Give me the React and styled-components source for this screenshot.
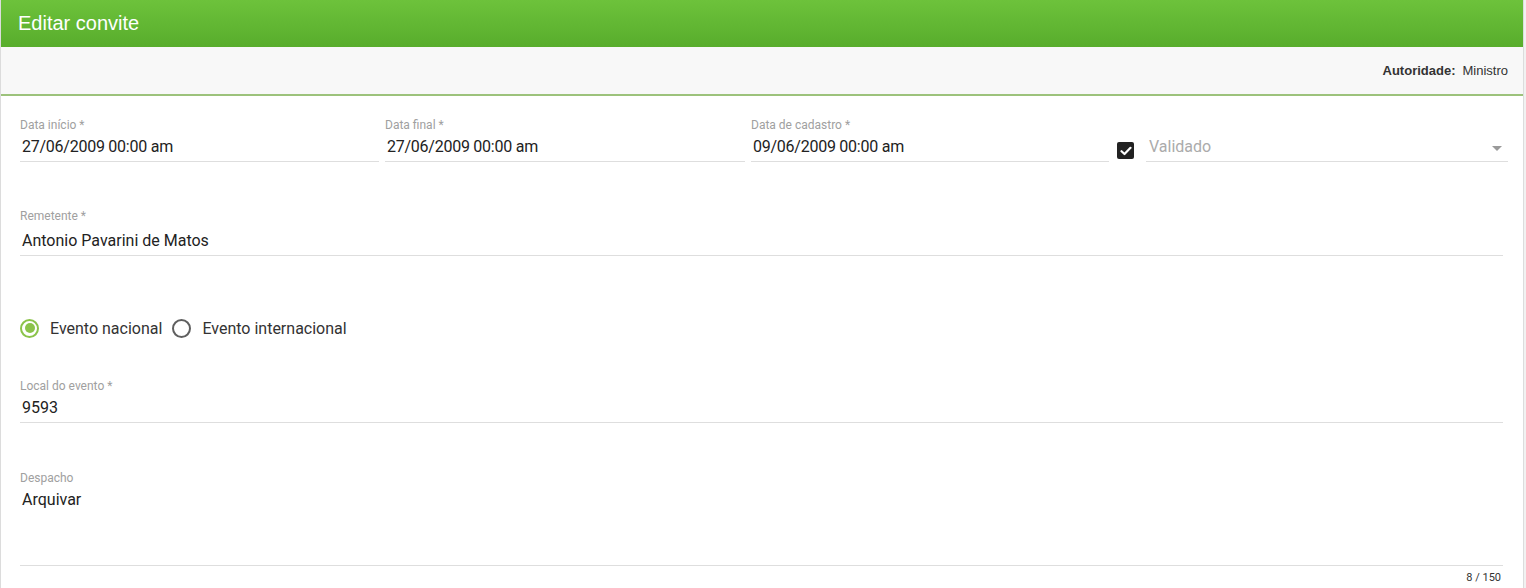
import React from 'react';
import styled, { createGlobalStyle } from 'styled-components';

const GlobalStyle = createGlobalStyle`
    body {
        margin: 0;
        background: #f1f1f1;
        font-family: Roboto, "Liberation Sans", Arial, sans-serif;
    }
`;

const Card = styled.div`
    width: 1522px;
    height: 588px;
    background: #fff;
    border-left: 1px solid #dcdcdc;
    border-right: 1px solid #dcdcdc;
    overflow: hidden;
`;

const Header = styled.div`
    height: 47px;
    display: flex;
    align-items: center;
    padding-left: 17px;
    background: linear-gradient(#6dc23b, #58ad2c);
    color: #fff;
    font-family: "Liberation Sans", Arial, sans-serif;
    font-size: 20px;
`;

const InfoBar = styled.div`
    height: 47px;
    display: flex;
    align-items: center;
    justify-content: flex-end;
    padding-right: 15px;
    background: #f8f8f8;
    border-bottom: 2px solid #9cc27b;
    font-family: "Liberation Sans", Arial, sans-serif;
    font-size: 13px;
    color: #333;
    b {
        margin-right: 7px;
    }
`;

const Form = styled.div`
    padding: 22px 20px 0 19px;
`;

const DateRow = styled.div`
    display: grid;
    grid-template-columns: 359px 360px 358px 25px 362px;
    column-gap: 6px;
`;

const Section = styled.div`
    margin-top: ${(p) => p.top || 0}px;
`;

const Field = styled.div`
    display: flex;
    flex-direction: column;
`;

const Label = styled.label`
    font-size: 12px;
    line-height: 14px;
    color: #a0a0a0;
    margin-bottom: ${(p) => p.gap || 1}px;
`;

const Value = styled.div`
    height: ${(p) => p.h || 28}px;
    line-height: 28px;
    font-size: 16px;
    color: #222;
    padding-left: 2px;
    border-bottom: 1px solid #dedede;
    letter-spacing: ${(p) => (p.date ? '-0.25px' : 'normal')};
`;

const CheckCell = styled.div`
    display: flex;
    justify-content: center;
    padding-top: 24px;
    padding-right: 4px;
`;

const CheckBox = styled.span`
    width: 17px;
    height: 17px;
    border-radius: 2px;
    background: #222;
    display: flex;
    align-items: center;
    justify-content: center;
`;

const Select = styled.div`
    margin-top: 15px;
    height: 28px;
    line-height: 28px;
    border-bottom: 1px solid #dedede;
    display: flex;
    justify-content: space-between;
    align-items: center;
    padding: 0 6px 0 3px;
    font-size: 16px;
    color: #ababab;
`;

const Caret = styled.span`
    width: 0;
    height: 0;
    border-left: 5px solid transparent;
    border-right: 5px solid transparent;
    border-top: 5px solid #9a9a9a;
    margin-top: 2px;
`;

const RadioGroup = styled.div`
    display: flex;
    align-items: center;
    height: 18px;
`;

const RadioOption = styled.label`
    display: flex;
    align-items: center;
    margin-right: 10px;
    font-size: 16px;
    color: #333;
`;

const Ring = styled.span`
    box-sizing: border-box;
    width: 19px;
    height: 19px;
    border-radius: 50%;
    border: 2px solid ${(p) => (p.checked ? '#8bc34a' : '#5f5f5f')};
    display: flex;
    align-items: center;
    justify-content: center;
    margin-right: 11px;
    &::after {
        content: '';
        width: 10px;
        height: 10px;
        border-radius: 50%;
        background: ${(p) => (p.checked ? '#8bc34a' : 'transparent')};
    }
`;

const Counter = styled.div`
    text-align: right;
    font-size: 11px;
    color: #333;
    margin-top: 5px;
    padding-right: 2px;
`;

function DateField({ label, value }) {
    return (
        <Field>
            <Label>{label} *</Label>
            <Value date>{value}</Value>
        </Field>
    );
}

export default function App() {
    return (
        <>
            <GlobalStyle />
            <Card>
                <Header>Editar convite</Header>
                <InfoBar>
                    <b>Autoridade:</b>Ministro
                </InfoBar>
                <Form>
                    <DateRow>
                        <DateField label="Data início" value="27/06/2009 00:00 am" />
                        <DateField label="Data final" value="27/06/2009 00:00 am" />
                        <DateField label="Data de cadastro" value="09/06/2009 00:00 am" />
                        <CheckCell>
                            <CheckBox>
                                <svg width="12" height="10" viewBox="0 0 12 10">
                                    <path d="M1.5 5.2 L4.5 8 L10.5 1.8" fill="none" stroke="#fff" strokeWidth="2.2" strokeLinecap="round" strokeLinejoin="round" />
                                </svg>
                            </CheckBox>
                        </CheckCell>
                        <Select>
                            Validado
                            <Caret />
                        </Select>
                    </DateRow>

                    <Section top={47}>
                        <Field>
                            <Label gap={4}>Remetente *</Label>
                            <Value>Antonio Pavarini de Matos</Value>
                        </Field>
                    </Section>

                    <Section top={63}>
                        <RadioGroup>
                            <RadioOption>
                                <Ring checked />
                                Evento nacional
                            </RadioOption>
                            <RadioOption>
                                <Ring />
                                Evento internacional
                            </RadioOption>
                        </RadioGroup>
                    </Section>

                    <Section top={42}>
                        <Field>
                            <Label>Local do evento *</Label>
                            <Value>9593</Value>
                        </Field>
                    </Section>

                    <Section top={48}>
                        <Field>
                            <Label>Despacho</Label>
                            <Value h={79}>Arquivar</Value>
                        </Field>
                        <Counter>8 / 150</Counter>
                    </Section>
                </Form>
            </Card>
        </>
    );
}
